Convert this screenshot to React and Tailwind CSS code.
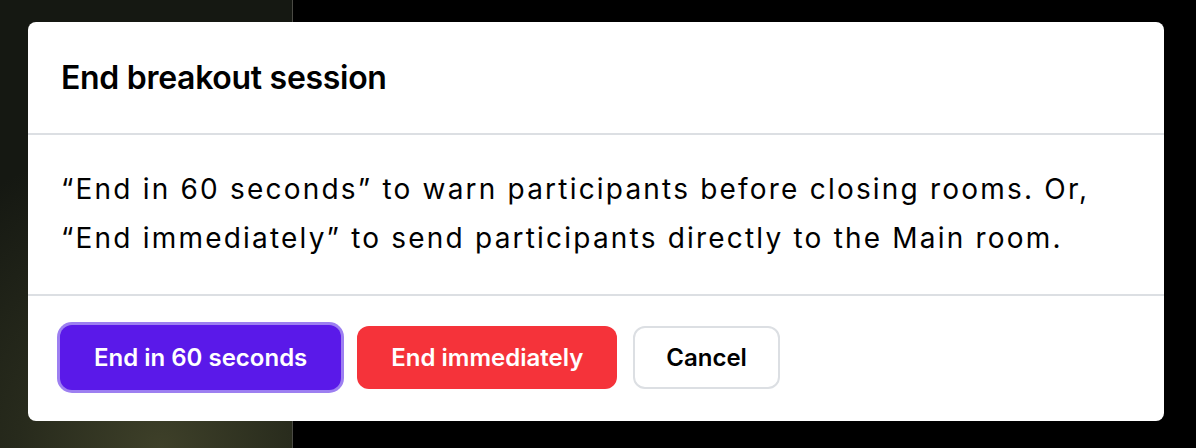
import React from 'react';

const App = () => {
  return (
    <div className="relative w-[1196px] h-[448px] overflow-hidden bg-black font-['Inter',sans-serif]">
      {/* background: video tile on the left, black elsewhere */}
      <div className="absolute left-0 top-0 h-full w-[293px] border-r border-[#4a4a44] bg-[radial-gradient(circle_at_55%_100%,#3e4029_0%,#272a1c_30%,#151812_65%)]" />

      <div className="relative pt-[22px] pl-[28px]">
        <div className="w-[1136px] rounded-lg bg-white text-black">
          <div className="px-[33px] pt-[32px] pb-[31px] border-b-2 border-[#dcdfe3]">
            <h1 className="text-[32px] leading-[48px] font-semibold tracking-[-0.3px]">End breakout session</h1>
          </div>

          <div className="px-[33px] pt-[30px] pb-[31px] border-b-2 border-[#dcdfe3]">
            <p className="text-[28px] leading-[49px] tracking-[2.2px]">
              “End in 60 seconds” to warn participants before closing rooms. Or,
              <br />
              “End immediately” to send participants directly to the Main room.
            </p>
          </div>

          <div className="flex items-center gap-4 px-[32px] pt-[29px] pb-[31px]">
            <button className="h-[65px] px-[34px] rounded-xl bg-[#5a19e9] text-white text-[24px] font-semibold ring-[3px] ring-[#9d7ff1]">
              End in 60 seconds
            </button>
            <button className="h-[63px] px-[34px] rounded-xl bg-[#f5333a] text-white text-[24px] font-semibold">
              End immediately
            </button>
            <button className="h-[63px] px-[31px] rounded-xl border-2 border-[#dcdfe3] bg-white text-black text-[24px] font-semibold">
              Cancel
            </button>
          </div>
        </div>
      </div>
    </div>
  );
};

export default App;
